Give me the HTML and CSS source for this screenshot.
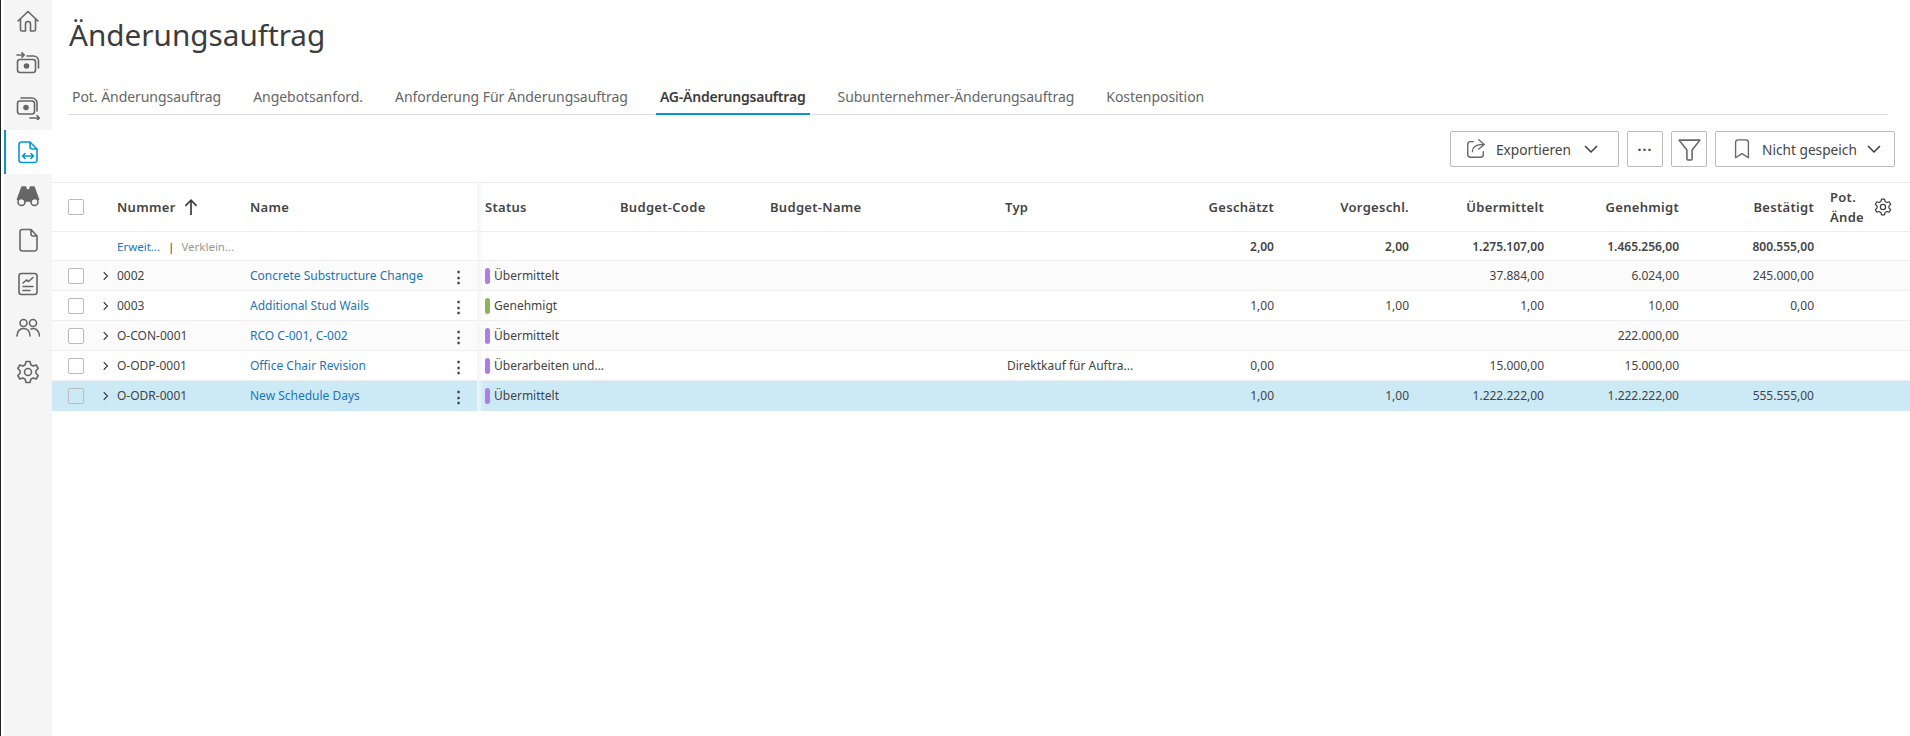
FILE: index.html
```html
<!DOCTYPE html>
<html lang="de">
<head>
<meta charset="utf-8">
<title>Änderungsauftrag</title>
<link rel="stylesheet" href="styles.css">
</head>
<body>
<div class="app">
  <nav class="sidebar">
    <div class="nav-list">
    <a class="nav-item first"><svg viewBox="0 0 24 24" class="nav-icon"><path d="M2 12 12 2.500 22 12M4.500 10v10.500a1.500 1.500 0 0 0 1.500 1.500h3.500v-7a2.500 2.500 0 0 1 5 0v7H18a1.500 1.500 0 0 0 1.500-1.500V10"/></svg></a>
    <a class="nav-item"><svg viewBox="0 0 24 24" class="nav-icon"><path d="M1 3h7M6 .8 8.300 3 6 5.200M11 4h6.500a5 5 0 0 1 5 5v7"/><rect x="1.500" y="7.500" width="18" height="13" rx="2.500"/><circle cx="10.500" cy="14" r="2" class="fill"/></svg></a>
    <a class="nav-item"><svg viewBox="0 0 24 24" class="nav-icon"><path d="M5 2h11a5 5 0 0 1 5 5v8M14 22h9M21 19.500 23.300 22 21 24.300"/><rect x="1.500" y="5" width="17" height="13" rx="2.500"/><circle cx="10" cy="11.500" r="2" class="fill"/></svg></a>
    <a class="nav-item active"><svg viewBox="0 0 24 24" class="nav-icon"><path d="M6 2h8l7 7v11a2.500 2.500 0 0 1-2.500 2.500h-13A2.500 2.500 0 0 1 3 20V4.500A2.500 2.500 0 0 1 5.500 2zM14 2v4.500A2.500 2.500 0 0 0 16.500 9H21M6.500 16h11M9 13.500 6.500 16 9 18.500M15 13.500l2.500 2.500-2.500 2.500"/></svg></a>
    <a class="nav-item"><svg viewBox="0 0 24 24" class="nav-icon"><path class="fill" d="M6 3h3.500l1 3h3l1-3H18l4.500 12.500a4.500 4.500 0 0 0-7.500 1.500H9a4.500 4.500 0 0 0-7.500-1.500z"/><circle cx="5.500" cy="18" r="3.500"/><circle cx="18.500" cy="18" r="3.500"/></svg></a>
    <a class="nav-item"><svg viewBox="0 0 24 24" class="nav-icon"><path d="M6 1.500h9l6 6.500v12.500a2.500 2.500 0 0 1-2.500 2.500h-12A2.500 2.500 0 0 1 4 20.500V4A2.500 2.500 0 0 1 6 1.500zM15 1.500V6a2 2 0 0 0 2 2h4"/></svg></a>
    <a class="nav-item"><svg viewBox="0 0 24 24" class="nav-icon"><rect x="3" y="1.500" width="18" height="21" rx="2.500"/><path d="M7 11l3.500-3 2 1.500L17 5.500M7 14.500h10M7 18.500h7"/></svg></a>
    <a class="nav-item"><svg viewBox="0 0 24 24" class="nav-icon"><circle cx="7.500" cy="7" r="3.500"/><circle cx="17" cy="7" r="3.500"/><path d="M1 20c0-5 3-7.500 6.500-7.500S14 15 14 20M15 13c4-1.500 8 1 8.500 7"/></svg></a>
    <a class="nav-item"><svg viewBox="0 0 24 24" class="nav-icon"><path d="M10 1.500h4l.8 3.200 2.300 1.300 3.100-1 2 3.500-2.300 2.300v2.400l2.300 2.300-2 3.500-3.100-1-2.300 1.300-.8 3.200h-4l-.8-3.200-2.300-1.300-3.100 1-2-3.500 2.300-2.300v-2.400L1.800 8.500l2-3.500 3.100 1 2.300-1.300z"/><circle cx="12" cy="12" r="3.500"/></svg></a>
    </div>
  </nav>
  <main class="content">
    <h1 class="title">Änderungsauftrag</h1>
    <div class="tabs">
      <a class="tab">Pot. Änderungsauftrag</a>
      <a class="tab">Angebotsanford.</a>
      <a class="tab">Anforderung Für Änderungsauftrag</a>
      <a class="tab tab-active">AG-Änderungsauftrag</a>
      <a class="tab">Subunternehmer-Änderungsauftrag</a>
      <a class="tab">Kostenposition</a>
    </div>
    <div class="toolbar">
      <button class="btn btn-export"><svg viewBox="0 0 24 24" class="btn-icon"><path d="M9 4H6a3 3 0 0 0-3 3v11a3 3 0 0 0 3 3h11a3 3 0 0 0 3-3v-3M8 15c0-5 4-8 12-8M15 2l6 5-6 5"/></svg><span>Exportieren</span><svg viewBox="0 0 16 16" class="chev"><path d="M2 5 8 11 14 5"/></svg></button>
      <button class="btn btn-square"><span class="dots">···</span></button>
      <button class="btn btn-square"><svg viewBox="0 0 24 24" class="btn-icon filter"><path d="M2 3h20l-7.500 9.500V21a1 1 0 0 1-1 1h-3a1 1 0 0 1-1-1v-8.500z"/></svg></button>
      <button class="btn btn-save"><svg viewBox="0 0 24 24" class="btn-icon"><path d="M5 21.500V5a3 3 0 0 1 3-3h8a3 3 0 0 1 3 3v16.500l-7-4.500z"/></svg><span>Nicht gespeich</span><svg viewBox="0 0 16 16" class="chev"><path d="M2 5 8 11 14 5"/></svg></button>
    </div>
    <div class="grid">
      <div class="row head">
        <div class="cell c-check"><span class="box"></span></div>
        <div class="cell">Nummer<svg viewBox="0 0 16 16" class="sort"><path d="M8 15V2M3 7l5-5 5 5"/></svg></div>
        <div class="cell c-name">Name</div>
        <div class="cell c-status">Status</div>
        <div class="cell">Budget-Code</div>
        <div class="cell">Budget-Name</div>
        <div class="cell">Typ</div>
        <div class="cell num">Geschätzt</div>
        <div class="cell num">Vorgeschl.</div>
        <div class="cell num">Übermittelt</div>
        <div class="cell num">Genehmigt</div>
        <div class="cell num">Bestätigt</div>
        <div class="cell c-last"><span class="wrap">Pot. Ände</span><svg viewBox="0 0 24 24" class="gear"><path d="M10 1.500h4l.8 3.200 2.300 1.300 3.100-1 2 3.500-2.300 2.300v2.400l2.300 2.300-2 3.500-3.100-1-2.300 1.300-.8 3.200h-4l-.8-3.200-2.300-1.300-3.100 1-2-3.500 2.300-2.300v-2.400L1.800 8.500l2-3.500 3.100 1 2.300-1.300z"/><circle cx="12" cy="12" r="3.500"/></svg></div>
      </div>
      <div class="row totals">
        <div class="cell c-check"></div>
        <div class="cell c-span"><a class="link">Erweit...</a><span class="sep">|</span><span class="muted">Verklein...</span></div>
        <div class="cell c-status"></div>
        <div class="cell"></div>
        <div class="cell"></div>
        <div class="cell"></div>
        <div class="cell num">2,00</div>
        <div class="cell num">2,00</div>
        <div class="cell num">1.275.107,00</div>
        <div class="cell num">1.465.256,00</div>
        <div class="cell num">800.555,00</div>
        <div class="cell"></div>
      </div>
      <div class="row alt">
        <div class="cell c-check"><span class="box"></span><svg viewBox="0 0 16 16" class="caret"><path d="M5 3l5 5-5 5"/></svg></div>
        <div class="cell">0002</div>
        <div class="cell c-name"><a class="link">Concrete Substructure Change</a><span class="kebab">⋮</span></div>
        <div class="cell c-status"><i class="pill violet"></i>Übermittelt</div>
        <div class="cell"></div><div class="cell"></div><div class="cell"></div>
        <div class="cell num"></div><div class="cell num"></div>
        <div class="cell num">37.884,00</div>
        <div class="cell num">6.024,00</div>
        <div class="cell num">245.000,00</div>
        <div class="cell"></div>
      </div>
      <div class="row">
        <div class="cell c-check"><span class="box"></span><svg viewBox="0 0 16 16" class="caret"><path d="M5 3l5 5-5 5"/></svg></div>
        <div class="cell">0003</div>
        <div class="cell c-name"><a class="link">Additional Stud Wails</a><span class="kebab">⋮</span></div>
        <div class="cell c-status"><i class="pill green"></i>Genehmigt</div>
        <div class="cell"></div><div class="cell"></div><div class="cell"></div>
        <div class="cell num">1,00</div><div class="cell num">1,00</div>
        <div class="cell num">1,00</div>
        <div class="cell num">10,00</div>
        <div class="cell num">0,00</div>
        <div class="cell"></div>
      </div>
      <div class="row alt">
        <div class="cell c-check"><span class="box"></span><svg viewBox="0 0 16 16" class="caret"><path d="M5 3l5 5-5 5"/></svg></div>
        <div class="cell">O-CON-0001</div>
        <div class="cell c-name"><a class="link">RCO C-001, C-002</a><span class="kebab">⋮</span></div>
        <div class="cell c-status"><i class="pill violet"></i>Übermittelt</div>
        <div class="cell"></div><div class="cell"></div><div class="cell"></div>
        <div class="cell num"></div><div class="cell num"></div>
        <div class="cell num"></div>
        <div class="cell num">222.000,00</div>
        <div class="cell num"></div>
        <div class="cell"></div>
      </div>
      <div class="row">
        <div class="cell c-check"><span class="box"></span><svg viewBox="0 0 16 16" class="caret"><path d="M5 3l5 5-5 5"/></svg></div>
        <div class="cell">O-ODP-0001</div>
        <div class="cell c-name"><a class="link">Office Chair Revision</a><span class="kebab">⋮</span></div>
        <div class="cell c-status"><i class="pill violet"></i>Überarbeiten und...</div>
        <div class="cell"></div><div class="cell"></div>
        <div class="cell c-type">Direktkauf für Auftra...</div>
        <div class="cell num">0,00</div><div class="cell num"></div>
        <div class="cell num">15.000,00</div>
        <div class="cell num">15.000,00</div>
        <div class="cell num"></div>
        <div class="cell"></div>
      </div>
      <div class="row selected">
        <div class="cell c-check"><span class="box"></span><svg viewBox="0 0 16 16" class="caret"><path d="M5 3l5 5-5 5"/></svg></div>
        <div class="cell">O-ODR-0001</div>
        <div class="cell c-name"><a class="link">New Schedule Days</a><span class="kebab">⋮</span></div>
        <div class="cell c-status"><i class="pill violet"></i>Übermittelt</div>
        <div class="cell"></div><div class="cell"></div><div class="cell"></div>
        <div class="cell num">1,00</div><div class="cell num">1,00</div>
        <div class="cell num">1.222.222,00</div>
        <div class="cell num">1.222.222,00</div>
        <div class="cell num">555.555,00</div>
        <div class="cell"></div>
      </div>
      <div class="frozen-shadow"></div>
    </div>
  </main>
</div>
</body>
</html>
```

FILE: styles.css
```css
* { box-sizing: border-box; }
html, body { margin: 0; height: 100%; overflow: hidden; background: #fff; }
body { font-family: "Noto Sans", "Open Sans", sans-serif; color: #444; }
.app { display: flex; height: 736px; }

.sidebar { width: 52px; flex: none; background: #fff; border-left: 1px solid #222; padding-left: 3px; }
.nav-list { height: 100%; background: #f5f5f5; display: flex; flex-direction: column; }
.nav-item { height: 44px; display: flex; align-items: center; justify-content: center; }
.nav-item.first { height: 42px; }
.nav-item.active { background: #fff; border-left: 2px solid #0696d7; padding-right: 2px; }
.nav-item.active .nav-icon { stroke: #0696d7; }
.nav-icon { width: 24px; height: 24px; fill: none; stroke: #666; stroke-width: 1.600; stroke-linecap: round; stroke-linejoin: round; }
.nav-icon .fill { fill: #666; }

.content { flex: 1; min-width: 0; display: flex; flex-direction: column; }
.title { margin: 0; padding: 13px 0 0 17px; height: 85px; font-size: 29.700px; font-weight: 400; line-height: 44px; color: #3c3c3c; }
.tabs { display: flex; gap: 24px; margin: 0 22px 0 16px; height: 30px; border-bottom: 1px solid #ddd; }
.tab { padding: 0 4px; height: 30px; line-height: 24px; font-size: 14px; letter-spacing: -.05px; color: #666; white-space: nowrap; }
.tab-active { color: #3c3c3c; font-weight: 600; letter-spacing: -.2px; border-bottom: 2px solid #0696d7; }

.toolbar { display: flex; justify-content: flex-end; gap: 8px; padding: 16px 15px 0 0; height: 68px; border-bottom: 1px solid #eee; }
.btn { height: 36px; background: #fff; border: 1px solid #bbb; border-radius: 2px; font: inherit; font-size: 13.700px; color: #444; display: flex; align-items: center; padding: 0; }
.btn-export { width: 169px; padding-left: 14px; }
.btn-save { width: 180px; padding-left: 15px; }
.btn-square { width: 36px; justify-content: center; }
.btn-icon { width: 22px; height: 22px; fill: none; stroke: #666; stroke-width: 1.500; stroke-linecap: round; stroke-linejoin: round; margin-right: 9px; flex: none; }
.btn-icon.filter { width: 25px; height: 25px; margin: 0; }
.chev { width: 16px; height: 16px; margin-left: auto; margin-right: 19px; fill: none; stroke: #3c3c3c; stroke-width: 1.500; }
.btn-save .chev { margin-right: 12px; }
.dots { letter-spacing: 1px; font-weight: 700; font-size: 14px; }

.grid { position: relative; font-size: 12px; }
.row { display: grid; grid-template-columns: 65px 133px 227px 143px 150px 235px 142px 135px 135px 135px 135px 135px 88px; height: 30px; border-bottom: 1px solid #eee; align-items: center; }
.row.head { height: 49px; font-size: 13px; font-weight: 600; letter-spacing: .3px; }
.row.totals { height: 29px; font-weight: 600; }
.row.alt { background: #fbfbfb; }
.row.selected { background: #cce9f6; border-bottom-color: #cce9f6; }
.cell { display: flex; align-items: center; height: 100%; min-width: 0; white-space: nowrap; }
.c-check { padding-left: 16px; gap: 14px; }
.c-name { padding-right: 4px; justify-content: space-between; }
.c-status { padding-left: 8px; }
.c-type { padding-left: 2px; }
.c-span { grid-column: span 2; font-weight: 400; font-size: 11.500px; }
.num { justify-content: flex-end; padding-right: 8px; }
.c-last { padding-left: 8px; gap: 8px; }
.wrap { width: 36px; white-space: normal; line-height: 20px; }
.box { width: 16px; height: 16px; border: 1px solid #bbb; border-radius: 2px; background: #fff; flex: none; }
.selected .box { background: #cce9f6; }
.caret { width: 12px; height: 12px; fill: none; stroke: #3c3c3c; stroke-width: 1.500; margin-left: 2px; }
.sort { width: 18px; height: 18px; margin-left: 6px; fill: none; stroke: #3c3c3c; stroke-width: 1.500; }
.gear { width: 18px; height: 18px; fill: none; stroke: #3c3c3c; stroke-width: 1.600; stroke-linejoin: round; }
.link { color: #1a76b8; }
.sep { margin: 0 7px 0 8px; color: #3c3c3c; }
.muted { color: #999; }
.kebab { font-size: 15px; font-weight: 700; color: #3c3c3c; width: 16px; text-align: center; margin-right: 7px; }
.pill { width: 5px; height: 16px; border-radius: 2.500px; margin-right: 4px; flex: none; }
.violet { background: #b07de8; }
.green { background: #8fb35a; }
.frozen-shadow { position: absolute; left: 425px; top: 0; bottom: 0; width: 7px; background: linear-gradient(90deg, #f5f5f5, rgba(255,255,255,0)); pointer-events: none; }
```
